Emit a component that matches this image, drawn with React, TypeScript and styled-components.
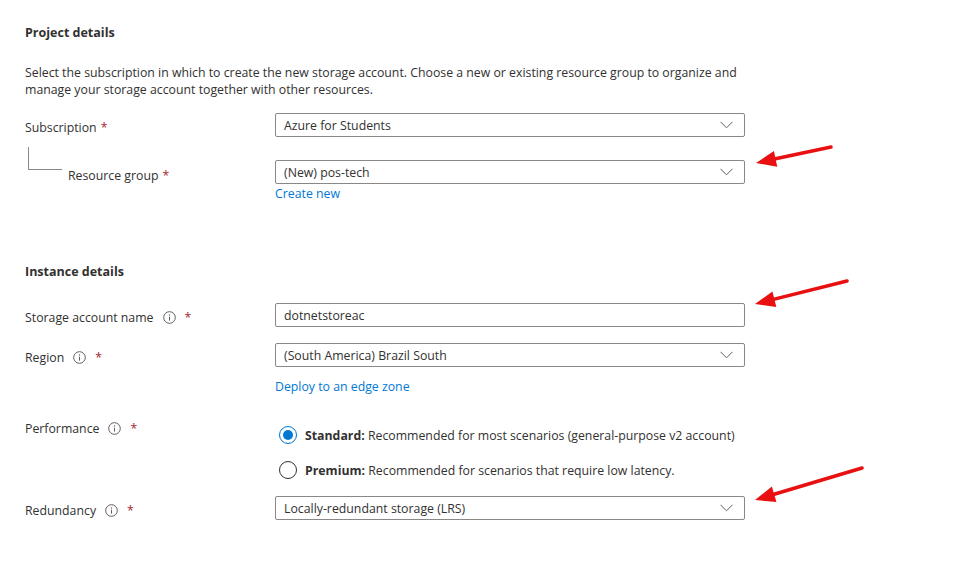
import React from "react";
import styled, { createGlobalStyle } from "styled-components";

const Global = createGlobalStyle`
  html, body { margin: 0; padding: 0; background: #fff; }
  body { font-family: "Open Sans", "Noto Sans", sans-serif; font-size: 12.3px; color: #323130; }
`;

const Page = styled.div`
  position: relative;
  width: 960px;
  height: 586px;
  padding: 24px 0 0 25px;
  box-sizing: border-box;
`;

const Heading = styled.h2<{ $top?: number }>`
  margin: ${(p) => p.$top ?? 0}px 0 0 0;
  font-size: 12.5px;
  font-weight: 700;
  line-height: 18px;
  color: #323130;
`;

const Description = styled.p`
  margin: 22px 0 0 0;
  line-height: 17px;
  width: 740px;
`;

const Row = styled.div<{ $top: number }>`
  display: grid;
  grid-template-columns: 250px 470px;
  align-items: start;
  margin-top: ${(p) => p.$top}px;
`;

const Label = styled.div<{ $indent?: boolean; $offset?: number }>`
  display: flex;
  align-items: center;
  padding-left: ${(p) => (p.$indent ? 43 : 0)}px;
  padding-top: ${(p) => p.$offset ?? 6}px;
  line-height: 17px;
  position: relative;
`;

const Connector = styled.span`
  position: absolute;
  left: 3px;
  top: -13px;
  width: 33px;
  height: 22px;
  border-left: 1px solid #8a8886;
  border-bottom: 1px solid #8a8886;
`;

const Required = styled.span`
  color: #a4262c;
  margin-left: 4px;
`;

const InfoWrap = styled.span`
  display: inline-flex;
  margin-left: 9px;
  margin-right: 5px;
`;

const Box = styled.div`
  height: 24px;
  box-sizing: border-box;
  border: 1px solid #8a8886;
  border-radius: 2px;
  display: flex;
  align-items: center;
  justify-content: space-between;
  padding: 0 11px 0 8px;
  line-height: 17px;
`;

const Control = styled.div`
  display: flex;
  flex-direction: column;
`;

const Link = styled.a<{ $top: number }>`
  color: #0078d4;
  text-decoration: none;
  margin-top: ${(p) => p.$top}px;
  line-height: 17px;
`;

const RadioGroup = styled.div`
  display: flex;
  flex-direction: column;
  gap: 17px;
  padding: 7px 0 0 4px;
`;

const RadioOption = styled.label`
  display: flex;
  align-items: center;
  gap: 8px;
  line-height: 17px;
`;

const RadioCircle = styled.span<{ $checked?: boolean }>`
  width: 18px;
  height: 18px;
  box-sizing: border-box;
  border-radius: 50%;
  border: 1px solid ${(p) => (p.$checked ? "#0078d4" : "#323130")};
  display: inline-flex;
  align-items: center;
  justify-content: center;
  &::after {
    content: "";
    display: ${(p) => (p.$checked ? "block" : "none")};
    width: 10px;
    height: 10px;
    border-radius: 50%;
    background: #0078d4;
  }
`;

const Strong = styled.b`
  font-weight: 700;
`;

const Annotations = styled.svg`
  position: absolute;
  left: 0;
  top: 0;
  pointer-events: none;
`;

const Chevron = () => (
  <svg width="13" height="8" viewBox="0 0 13 8">
    <path d="M0.5 0.8 L6.5 6.8 L12.5 0.8" fill="none" stroke="#605e5c" strokeWidth="1" />
  </svg>
);

const Info = () => (
  <InfoWrap>
    <svg width="13" height="13" viewBox="0 0 13 13">
      <circle cx="6.5" cy="6.5" r="5.8" fill="none" stroke="#605e5c" strokeWidth="1" />
      <circle cx="6.5" cy="4" r="0.7" fill="#605e5c" />
      <path d="M6.5 5.7 V9.6" stroke="#605e5c" strokeWidth="1" />
    </svg>
  </InfoWrap>
);

const Arrow = ({ x1, y1, x2, y2 }: { x1: number; y1: number; x2: number; y2: number }) => {
  const ang = Math.atan2(y2 - y1, x2 - x1);
  const len = 20;
  const w = 8;
  const bx = x2 - Math.cos(ang) * len;
  const by = y2 - Math.sin(ang) * len;
  const px = -Math.sin(ang) * w;
  const py = Math.cos(ang) * w;
  return (
    <g>
      <line x1={x1} y1={y1} x2={bx} y2={by} stroke="#e81010" strokeWidth="3.5" strokeLinecap="round" />
      <polygon points={`${x2},${y2} ${bx + px},${by + py} ${bx - px},${by - py}`} fill="#e81010" />
    </g>
  );
};

export default function App() {
  return (
    <>
      <Global />
      <Page>
        <Heading>Project details</Heading>
        <Description>
          Select the subscription in which to create the new storage account. Choose a new or existing resource group to organize and
          manage your storage account together with other resources.
        </Description>

        <Row $top={15}>
          <Label $offset={6}>
            Subscription<Required>*</Required>
          </Label>
          <Box>
            Azure for Students
            <Chevron />
          </Box>
        </Row>

        <Row $top={23}>
          <Label $indent $offset={7}>
            <Connector />
            Resource group<Required>*</Required>
          </Label>
          <Control>
            <Box>
              (New) pos-tech
              <Chevron />
            </Box>
            <Link $top={1}>Create new</Link>
          </Control>
        </Row>

        <Heading $top={61}>Instance details</Heading>

        <Row $top={22}>
          <Label $offset={6}>
            Storage account name<Info /><Required>*</Required>
          </Label>
          <Box>dotnetstoreac</Box>
        </Row>

        <Row $top={16}>
          <Label $offset={6}>
            Region<Info /><Required>*</Required>
          </Label>
          <Control>
            <Box>
              (South America) Brazil South
              <Chevron />
            </Box>
            <Link $top={11}>Deploy to an edge zone</Link>
          </Control>
        </Row>

        <Row $top={24}>
          <Label $offset={1}>
            Performance<Info /><Required>*</Required>
          </Label>
          <RadioGroup>
            <RadioOption>
              <RadioCircle $checked />
              <span>
                <Strong>Standard:</Strong> Recommended for most scenarios (general-purpose v2 account)
              </span>
            </RadioOption>
            <RadioOption>
              <RadioCircle />
              <span>
                <Strong>Premium:</Strong> Recommended for scenarios that require low latency.
              </span>
            </RadioOption>
          </RadioGroup>
        </Row>

        <Row $top={17}>
          <Label $offset={6}>
            Redundancy<Info /><Required>*</Required>
          </Label>
          <Box>
            Locally-redundant storage (LRS)
            <Chevron />
          </Box>
        </Row>

        <Annotations width="960" height="586">
          <Arrow x1={831} y1={147} x2={756} y2={163} />
          <Arrow x1={847} y1={281} x2={755} y2={304} />
          <Arrow x1={862} y1={468} x2={755} y2={500} />
        </Annotations>
      </Page>
    </>
  );
}
